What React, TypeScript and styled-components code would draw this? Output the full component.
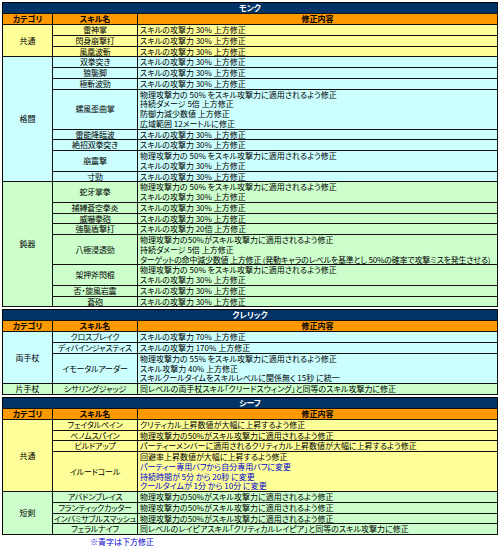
import React from "react";
import styled, { createGlobalStyle } from "styled-components";

type Tone = "yellow" | "cyan" | "green";

type Line = { text: string; blue?: boolean; tight?: boolean };

type Skill = {
  name: string;
  lines: Line[];
};

type Group = {
  category: string;
  tone: Tone;
  skills: Skill[];
};

type Section = {
  title: string;
  groups: Group[];
};

const tones: Record<Tone, string> = {
  yellow: "#ffff99",
  cyan: "#ccffff",
  green: "#ccffcc",
};

const atk30 = "スキルの攻撃力 30% 上方修正";
const phys50 = "物理攻撃力の 50% をスキル攻撃力に適用されるよう修正";
const phys50b = "物理攻撃力の50%がスキル攻撃力に適用されるよう修正";

const one = (name: string, text: string): Skill => ({ name, lines: [{ text }] });
const many = (name: string, ...texts: (string | Line)[]): Skill => ({
  name,
  lines: texts.map((t) => (typeof t === "string" ? { text: t } : t)),
});

const sections: Section[] = [
  {
    title: "モンク",
    groups: [
      {
        category: "共通",
        tone: "yellow",
        skills: [one("雷神掌", atk30), one("閃身崩撃打", atk30), one("風凰波斬", atk30)],
      },
      {
        category: "格闘",
        tone: "cyan",
        skills: [
          one("双拳突き", atk30),
          one("狼襲脚", atk30),
          one("極斬波勁", atk30),
          many(
            "螺風歪曲掌",
            phys50,
            "持続ダメージ 5倍 上方修正",
            "防御力減少数値 上方修正",
            "広域範囲 12メートルに修正"
          ),
          one("雷能降臨波", atk30),
          one("絶招双拳突き", atk30),
          many("崩震撃", phys50, atk30),
          one("寸勁", atk30),
        ],
      },
      {
        category: "鈍器",
        tone: "green",
        skills: [
          many("蛇牙掌拳", phys50, atk30),
          one("捕縛蒼空拳炎", atk30),
          one("威嚇拳砲", atk30),
          one("強襲盾撃打", "スキルの攻撃力 20倍 上方修正"),
          many("八極浸透勁", phys50b, "持続ダメージ 5倍 上方修正", {
            text: "ターゲットの命中減少数値 上方修正 (発動キャラのレベルを基準とし 50%の確率で攻撃ミスを発生させる)",
            tight: true,
          }),
          many("架押斧閃棍", phys50, atk30),
          one("否・旋風岩震", atk30),
          one("蒼砲", atk30),
        ],
      },
    ],
  },
  {
    title: "クレリック",
    groups: [
      {
        category: "両手杖",
        tone: "cyan",
        skills: [
          one("クロスブレイク", "スキルの攻撃力 70% 上方修正"),
          one("ディバインジャスティス", "スキルの攻撃力 170% 上方修正"),
          many(
            "イモータルアーダー",
            "物理攻撃力の 55% をスキル攻撃力に適用されるよう修正",
            "スキル攻撃力 40% 上方修正",
            "スキルクールタイムをスキルレベルに関係無く 15秒 に統一"
          ),
        ],
      },
      {
        category: "片手杖",
        tone: "green",
        skills: [
          one(
            "シサリングジャッジ",
            "同レベルの両手杖スキル「クリードスウィング」と同等のスキル攻撃力に修正"
          ),
        ],
      },
    ],
  },
  {
    title: "シーフ",
    groups: [
      {
        category: "共通",
        tone: "yellow",
        skills: [
          one("フェイタルペイン", "クリティカル上昇数値が大幅に上昇するよう修正"),
          one("ベノムスパイン", phys50b),
          one("ビルドアップ", "パーティーメンバーに適用されるクリティカル上昇数値が大幅に上昇するよう修正"),
          many(
            "イルードコール",
            "回避率上昇数値が大幅に上昇するよう修正",
            { text: "パーティー専用バフから自分専用バフに変更", blue: true },
            { text: "持続時間が 5分 から 20秒 に変更", blue: true },
            { text: "クールタイムが 1分 から 10分 に変更", blue: true }
          ),
        ],
      },
      {
        category: "短剣",
        tone: "green",
        skills: [
          one("アバドンブレイス", phys50b),
          one("フランティックカッター", phys50b),
          one("インバミサブルスマッシュ", phys50b),
          one("フェラルナイフ", "同レベルのレイピアスキル「クリティカルレイピア」と同等のスキル攻撃力に修正"),
        ],
      },
    ],
  },
];

const GlobalStyle = createGlobalStyle`
  body {
    margin: 0;
    background: #fff;
    font-family: "Noto Sans CJK JP", "Noto Sans", sans-serif;
    font-feature-settings: "palt";
  }
`;

const Page = styled.div`
  width: 500px;
  padding: 2px 0 0 2px;
  box-sizing: border-box;
`;

const SectionTable = styled.table`
  width: 496px;
  table-layout: fixed;
  border-collapse: separate;
  border-spacing: 0;
  border-top: 1px solid #000;
  border-left: 1px solid #000;
  font-size: 8px;
  line-height: 9.75px;
  & + & {
    margin-top: 2px;
  }
  td,
  th {
    padding: 0;
    border-right: 1px solid #111;
    border-bottom: 1px solid #111;
    white-space: nowrap;
  }
`;

const TitleCell = styled.th`
  background: #003366;
  color: #fff;
  font-weight: 700;
  text-align: center;
  height: 10px;
  line-height: 10px;
`;

const HeadCell = styled.th`
  background: #ff9900;
  color: #000;
  font-weight: 700;
  text-align: center;
  height: 10px;
  line-height: 10px;
`;

const CategoryCell = styled.td<{ $tone: Tone }>`
  background: ${(p) => tones[p.$tone]};
  text-align: center;
  vertical-align: middle;
  color: #000;
`;

const SkillCell = styled.td<{ $tone: Tone }>`
  background: ${(p) => tones[p.$tone]};
  text-align: center;
  vertical-align: middle;
  color: #000;
  letter-spacing: -0.2px;
`;

const ContentCell = styled.td<{ $tone: Tone }>`
  background: ${(p) => tones[p.$tone]};
  text-align: left;
  padding-left: 2px !important;
  color: #000;
`;

const LineText = styled.span<{ $blue?: boolean; $tight?: boolean }>`
  display: block;
  color: ${(p) => (p.$blue ? "#0000cc" : "#000")};
  letter-spacing: ${(p) => (p.$tight ? "-0.2px" : "0")};
`;

const Note = styled.div`
  padding: 1px 0 0 88px;
  font-size: 8px;
  line-height: 11px;
  color: #0000cc;
`;

const SectionBlock: React.FC<{ section: Section }> = ({ section }) => (
  <SectionTable>
    <colgroup>
      <col style={{ width: 50 }} />
      <col style={{ width: 85 }} />
      <col />
    </colgroup>
    <thead>
      <tr>
        <TitleCell colSpan={3}>{section.title}</TitleCell>
      </tr>
      <tr>
        <HeadCell>カテゴリ</HeadCell>
        <HeadCell>スキル名</HeadCell>
        <HeadCell>修正内容</HeadCell>
      </tr>
    </thead>
    <tbody>
      {section.groups.map((group) =>
        group.skills.map((skill, i) => (
          <tr key={group.category + skill.name}>
            {i === 0 && (
              <CategoryCell $tone={group.tone} rowSpan={group.skills.length}>
                {group.category}
              </CategoryCell>
            )}
            <SkillCell $tone={group.tone}>{skill.name}</SkillCell>
            <ContentCell $tone={group.tone}>
              {skill.lines.map((line, j) => (
                <LineText key={j} $blue={line.blue} $tight={line.tight}>
                  {line.text}
                </LineText>
              ))}
            </ContentCell>
          </tr>
        ))
      )}
    </tbody>
  </SectionTable>
);

export default function App() {
  return (
    <Page>
      <GlobalStyle />
      {sections.map((s) => (
        <SectionBlock key={s.title} section={s} />
      ))}
      <Note>※青字は下方修正</Note>
    </Page>
  );
}
